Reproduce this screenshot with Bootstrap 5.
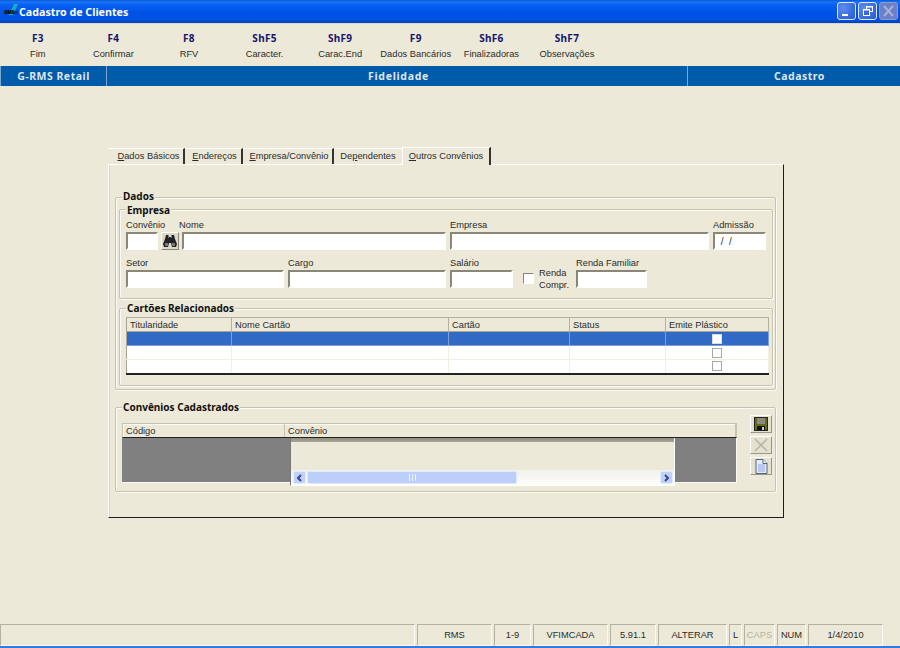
<!DOCTYPE html>
<html lang="pt">
<head>
<meta charset="utf-8">
<title>Cadastro de Clientes</title>
<link href="https://cdn.jsdelivr.net/npm/bootstrap@5.3.0/dist/css/bootstrap.min.css" rel="stylesheet">
<style>
html,body{height:100%;overflow:hidden}
body{background:#ece9d8;font-family:"Liberation Sans",sans-serif;font-size:9.3px;line-height:14px;color:#2b2b2b}
.shell{width:900px;height:648px}
.titlebar{height:24px;background:linear-gradient(180deg,#0a58d8 0,#1a75f5 2px,#0660f2 5px,#0053e6 12px,#0050e0 20px,#0240b8 23px,#d8d8d0 23px);color:#fff;font-family:"Noto Sans",sans-serif;font-weight:700;font-size:10.7px}
.appico{width:16px;height:16px;margin:0 0 2px 3px}
.capbtn{width:19px;height:18px;border:1px solid #dfe8f8;border-radius:3px;background:radial-gradient(circle at 30% 30%,#5d8cf0,#2558d4);margin-right:2px;margin-top:-2px}
.capbtn.off{background:#6a80c8;border-color:#8a9ad0}
.toolbar{height:42px}
.tool{width:75.6px;text-align:center}
.tool b{display:block;font-family:"Noto Sans",sans-serif;color:#14146e;font-size:10px;line-height:14px;margin-top:7px;margin-bottom:2px;letter-spacing:.3px}
.tool span{display:block;font-size:9.3px;line-height:14px;white-space:nowrap}
.modbar{height:20px;background:#005ba9;color:#dfe6f0;font-family:"Noto Sans",sans-serif;font-weight:700;font-size:10.5px;letter-spacing:.5px}
.modbar>div{text-align:center;line-height:20px;height:20px;border-right:1px solid #7fa6d0}
.mod-a{width:107px;border-left:1px solid #7fa6d0}
.mod-b{width:581px;padding-left:3px;letter-spacing:.7px}
.mod-c{width:212px;padding-left:11px;border-right:0!important}
.tabstrip{margin:60px 0 0 108px;height:18px;align-items:flex-end;flex-wrap:nowrap}
.tabstrip .nav-link{padding:0;height:16px;line-height:15px;color:#2b2b2b;font-size:9.3px;border-top:1px solid #fff;border-right:2px solid #333;white-space:nowrap;text-align:center;border-radius:0;background:#ece9d8}
.tabstrip .nav-link.active{height:18px;line-height:17px;border-left:1px solid #fff;margin-bottom:-1px;position:relative;z-index:1}
.tab-a{width:77px;padding-left:6px!important}.tab-b{width:58px;padding-left:3px!important}.tab-c{width:91px;padding-left:3px!important}.tab-d{width:68px;border-right:0!important}.tab-e{width:89px}
.sheet{margin-left:108px;width:676px;height:354px;border:1px solid #fff;border-right:1px solid #1c1c1c;border-bottom:1px solid #1c1c1c;padding:32px 0 0 6px;background:#ece9d8;box-shadow:1px 0 0 #d8d5c4 inset}
.groupbox{position:relative;border:1px solid #c6c3b1;box-shadow:inset 1px 1px 0 #fbfaf5,1px 1px 0 #fbfaf5;border-radius:2px}
.grouptitle{position:absolute;left:6px;top:-6px;background:#ece9d8;font-family:"Noto Sans",sans-serif;font-weight:700;font-size:10px;line-height:11px;padding:0 1px;color:#111}
.title-up{top:-7px}
.title-down{top:-5px}
.g-dados{width:661px;height:193px;padding:11px 0 0 3px}
.g-empresa{width:654px;height:90px;padding:8px 0 0 6px}
.g-cartoes{width:654px;height:78px;margin-top:9px;padding:8px 0 0 6px}
.g-conv{width:661px;height:85px;margin-top:17px;padding:15px 0 0 6px}
.field{display:block;flex:none}
.field label{display:block;height:14px;line-height:14px;white-space:nowrap;font-size:9.3px}
.sunken{display:block;height:18px;width:100%;padding:0 3px;border:2px solid;border-color:#8a8778 #fff #fff #8a8778;background:#fff;border-radius:0;font-size:10px;line-height:14px;outline:0;color:#333;font-family:inherit;white-space:pre}
.w32{width:32px}.w158{width:158px}.w264{width:264px}.w259{width:259px}.w53{width:53px}.w63{width:63px}.w71{width:71px}
.nudge{margin-left:-3px}
.row2{margin-top:6px}
.finder{width:18px;height:18px;margin:0 3px;padding:0;background:#dcd9c8;border:1px solid;border-color:#fff #8a8778 #8a8778 #fff;border-radius:0;display:flex;align-items:center;justify-content:center}
.tick{width:11px;height:11px;border:1px solid;border-color:#8a8778 #fff #fff #8a8778;background:#fff;margin:0 5px 4px 10px;flex:none}
.rendatxt{width:37px;line-height:12px;font-size:9.3px;flex:none;align-self:flex-end;margin-bottom:-3px}
.grid{border-collapse:collapse;table-layout:fixed;width:642px;border-bottom:2px solid #222;border-left:1px solid #a8a594;background:#fff}
.grid th{height:14px;padding:0 3px;font-weight:400;background:#ece9d8;border-top:1px solid #b4b1a0;border-right:1px solid #b4b1a0;border-bottom:1px solid #a8a594;font-size:9.3px;line-height:12px;overflow:hidden}
.grid td{height:14px;padding:0;border-right:1px solid #f1efe2;border-bottom:1px solid #f1efe2;text-align:center;line-height:0}
.grid tr.sel td{background:#316ac5;border-color:#7f9fd8}
.c-a{width:105px}.c-b{width:217px}.c-c{width:121px}.c-d{width:96px}.c-e{width:103px}
.gridcheck{display:inline-block;width:10px;height:10px;border:1px solid #a8a8a8;background:#fff}
tr.sel .gridcheck{border-color:#dcdcdc}
.list-wrap{width:615px;flex:none}
.list-head{height:15px;border:1px solid #c6c3b1;border-bottom:1px solid #222;display:flex;box-shadow:inset 1px 1px 0 #fbfaf5}
.list-head span{display:block;line-height:14px;padding-left:3px;font-size:9.3px;border-right:1px solid #c6c3b1;height:13px}
.hd-a{width:162px}
.list-body{height:45px;background:#808080;border-bottom:1px solid #fbfaf5;padding-left:168px;border-right:1px solid #fbfaf5}
.well-box{width:385px;height:48px;background:#ece9d8;border-right:1px solid #fff;border-bottom:1px solid #fff;border-left:1px solid #777;display:flex;flex-direction:column}
.well-shade{height:4px;background:linear-gradient(180deg,#8f8d7f,#a8a695)}
.well-gap{flex:1}
.hscroll{height:15px;background:linear-gradient(180deg,#f2f1ea,#fdfdfb);display:flex;align-items:center;padding:0 1px 0 2px}
.arrow{width:13px;height:13px;background:#c1d2fa;border:1px solid #e6ecfd;border-radius:2px;display:flex;align-items:center;justify-content:center;flex:none}
.thumb{width:210px;height:13px;margin-left:1px;background:#bccffb;border:1px solid #e0e8fd;border-radius:2px;display:flex;align-items:center;justify-content:center;flex:none}
.sideact{width:22px;margin:-8px 0 0 13px;gap:3px}
.sidebtn{width:22px;height:18px;padding:0;background:#e4e1d0;border:1px solid;border-color:#fff #9a9786 #9a9786 #fff;border-radius:0;display:flex;align-items:center;justify-content:center}
.statusbar{margin-top:106px;height:22px;gap:2px}
.cellst{height:22px;line-height:20px;text-align:center;border:1px solid;border-color:#b4b1a0 #fbfaf5 #fbfaf5 #b4b1a0;font-size:9.3px;flex:none;white-space:nowrap}
.muted-cell{color:#b5b3a6}
.taskedge{height:2px;background:#2f7be0}
.st-a{width:415px}.st-b{width:75px}.st-c{width:37px}.st-d{width:75px}.st-e{width:46px}.st-f{width:69px}.st-g{width:13px}.st-h{width:31px}.st-i{width:29px}.st-j{width:75px}
</style>
</head>
<body>
<div class="shell d-flex flex-column">
  <div class="titlebar d-flex align-items-center">
    <svg class="appico" viewBox="0 0 16 16"><polygon points="6,12 11,1 15,1 10,12" fill="#12b0c8"/><rect x="1" y="8" width="14" height="3" fill="#0a2a50" opacity=".6"/><text x="1.5" y="11" font-size="4.5" font-weight="700" fill="#000" font-family="Liberation Sans">RMS</text></svg>
    <span class="flex-grow-1">Cadastro de Clientes</span>
    <span class="capbtn d-flex align-items-end justify-content-start"><svg width="17" height="16" viewBox="0 0 17 16"><rect x="4" y="11" width="6" height="2" fill="#fff"/></svg></span>
    <span class="capbtn"><svg width="17" height="16" viewBox="0 0 17 16" fill="none" stroke="#fff"><rect x="7.5" y="3.5" width="6" height="5"/><rect x="4.5" y="6.5" width="6" height="6" fill="#3a68dc"/><path d="M7 4h7M4 7h7" stroke-width="1"/></svg></span>
    <span class="capbtn off"><svg width="17" height="16" viewBox="0 0 17 16" stroke="#a8b2d8" stroke-width="2"><path d="M4 3l9 10M13 3l-9 10"/></svg></span>
  </div>

  <div class="toolbar d-flex">
    <div class="tool"><b>F3</b><span>Fim</span></div>
    <div class="tool"><b>F4</b><span>Confirmar</span></div>
    <div class="tool"><b>F8</b><span>RFV</span></div>
    <div class="tool"><b>ShF5</b><span>Caracter.</span></div>
    <div class="tool"><b>ShF9</b><span>Carac.End</span></div>
    <div class="tool"><b>F9</b><span>Dados Bancários</span></div>
    <div class="tool"><b>ShF6</b><span>Finalizadoras</span></div>
    <div class="tool"><b>ShF7</b><span>Observações</span></div>
  </div>

  <div class="modbar d-flex">
    <div class="mod-a">G-RMS Retail</div>
    <div class="mod-b">Fidelidade</div>
    <div class="mod-c">Cadastro</div>
  </div>

  <ul class="nav tabstrip">
    <li class="nav-item"><a class="nav-link tab-a" href="#"><u>D</u>ados Básicos</a></li>
    <li class="nav-item"><a class="nav-link tab-b" href="#"><u>E</u>ndereços</a></li>
    <li class="nav-item"><a class="nav-link tab-c" href="#"><u>E</u>mpresa/Convênio</a></li>
    <li class="nav-item"><a class="nav-link tab-d" href="#">De<u>p</u>endentes</a></li>
    <li class="nav-item"><a class="nav-link active tab-e" href="#"><u>O</u>utros Convênios</a></li>
  </ul>

  <div class="sheet">
    <div class="groupbox g-dados">
      <div class="grouptitle title-up">Dados</div>
      <div class="groupbox g-empresa">
        <div class="grouptitle title-down">Empresa</div>
        <div class="d-flex align-items-end">
          <div class="field w32"><label>Convênio</label><input class="sunken" type="text"></div>
          <button class="finder" type="button" aria-label="Localizar"><svg width="14" height="12" viewBox="0 0 14 12"><path d="M3 0h2.5v3H6V2h2v1h.5V0H11l1 4 2 5-1 3H9L8 8H6l-1 4H1L0 9l2-5z" fill="#222"/><path d="M2 8h3v3H2zM9 8h3v3H9z" fill="#777"/></svg></button>
          <div class="field w264"><label class="nudge">Nome</label><input class="sunken" type="text"></div>
          <div class="field w259 ms-1"><label>Empresa</label><input class="sunken" type="text"></div>
          <div class="field w53 ms-1"><label>Admissão</label><input class="sunken" type="text" value=" /  /"></div>
        </div>
        <div class="d-flex align-items-end row2">
          <div class="field w158"><label>Setor</label><input class="sunken" type="text"></div>
          <div class="field w158 ms-1"><label>Cargo</label><input class="sunken" type="text"></div>
          <div class="field w63 ms-1"><label>Salário</label><input class="sunken" type="text"></div>
          <div class="tick"></div>
          <div class="rendatxt">Renda Compr.</div>
          <div class="field w71"><label>Renda Familiar</label><input class="sunken" type="text"></div>
        </div>
      </div>
      <div class="groupbox g-cartoes">
        <div class="grouptitle">Cartões Relacionados</div>
        <table class="grid">
          <colgroup><col class="c-a"><col class="c-b"><col class="c-c"><col class="c-d"><col class="c-e"></colgroup>
          <thead><tr><th>Titularidade</th><th>Nome Cartão</th><th>Cartão</th><th>Status</th><th>Emite Plástico</th></tr></thead>
          <tbody>
            <tr class="sel"><td></td><td></td><td></td><td></td><td><span class="gridcheck"></span></td></tr>
            <tr><td></td><td></td><td></td><td></td><td><span class="gridcheck"></span></td></tr>
            <tr><td></td><td></td><td></td><td></td><td><span class="gridcheck"></span></td></tr>
          </tbody>
        </table>
      </div>
    </div>

    <div class="groupbox g-conv d-flex">
      <div class="grouptitle">Convênios Cadastrados</div>
      <div class="list-wrap">
        <div class="list-head"><span class="hd-a">Código</span><span class="flex-grow-1">Convênio</span></div>
        <div class="list-body">
          <div class="well-box">
            <div class="well-shade"></div>
            <div class="well-gap"></div>
            <div class="hscroll">
              <span class="arrow"><svg width="7" height="8" viewBox="0 0 7 8" fill="none" stroke="#33468a" stroke-width="2"><path d="M5 1L2 4l3 3"/></svg></span>
              <span class="thumb"><svg width="9" height="7" viewBox="0 0 9 7" stroke="#f1f5ff"><path d="M1.5 0v7M4.5 0v7M7.5 0v7"/></svg></span>
              <span class="flex-grow-1"></span>
              <span class="arrow"><svg width="7" height="8" viewBox="0 0 7 8" fill="none" stroke="#33468a" stroke-width="2"><path d="M2 1l3 3-3 3"/></svg></span>
            </div>
          </div>
        </div>
      </div>
      <div class="sideact d-flex flex-column">
        <button class="sidebtn" type="button" aria-label="Salvar"><svg width="14" height="14" viewBox="0 0 14 14"><rect width="14" height="14" fill="#222"/><rect x="1" y="1" width="12" height="12" fill="#6a6a10"/><rect x="3" y="1" width="8" height="6" fill="#8a8a80"/><rect x="3" y="9" width="8" height="4" fill="#111"/><rect x="8" y="10" width="2" height="3" fill="#cfcfc0"/></svg></button>
        <button class="sidebtn" type="button" aria-label="Excluir"><svg width="14" height="14" viewBox="0 0 14 14" stroke="#b5b2a2" stroke-width="1.5"><path d="M1 1l12 12M13 1L1 13"/></svg></button>
        <button class="sidebtn" type="button" aria-label="Novo"><svg width="13" height="15" viewBox="0 0 13 15"><path d="M1 .5h7l4 4v10H1z" fill="#e4ebfa" stroke="#56627e"/><path d="M8 .5v4h4" fill="#fff" stroke="#56627e"/><path d="M3 6h7M3 8h7M3 10h7M3 12h7" stroke="#8fa6e0"/></svg></button>
      </div>
    </div>
  </div>

  <div class="statusbar d-flex">
    <div class="cellst st-a"></div>
    <div class="cellst st-b">RMS</div>
    <div class="cellst st-c">1-9</div>
    <div class="cellst st-d">VFIMCADA</div>
    <div class="cellst st-e">5.91.1</div>
    <div class="cellst st-f">ALTERAR</div>
    <div class="cellst st-g">L</div>
    <div class="cellst st-h muted-cell">CAPS</div>
    <div class="cellst st-i">NUM</div>
    <div class="cellst st-j">1/4/2010</div>
  </div>
  <div class="taskedge"></div>
</div>
<script src="https://cdn.jsdelivr.net/npm/bootstrap@5.3.0/dist/js/bootstrap.bundle.min.js"></script>
</body>
</html>
